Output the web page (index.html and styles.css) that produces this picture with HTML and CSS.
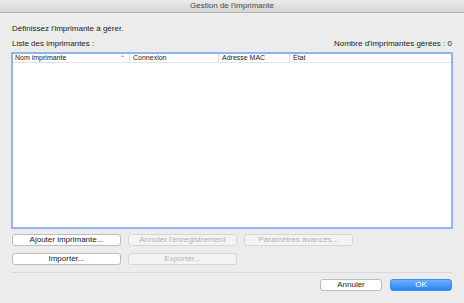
FILE: index.html
```html
<!DOCTYPE html>
<html lang="fr">

<head>
    <meta charset="UTF-8" />
    <title>Gestion de l'imprimante</title>
    <link rel="stylesheet" href="styles.css">
</head>

<body>
    <div class="dialog">
        <div class="titlebar">Gestion de l'imprimante</div>

        <div class="content">
            <p class="intro">Définissez l'imprimante à gérer.</p>

            <div class="list-head">
                <span>Liste des imprimantes :</span>
                <span>Nombre d'imprimantes gérées : 0</span>
            </div>

            <div class="table">
                <div class="table-header">
                    <div class="col col-name">Nom imprimante <span class="sort">&#8963;</span></div>
                    <div class="col">Connexion</div>
                    <div class="col">Adresse MAC</div>
                    <div class="col">État</div>
                </div>
                <div class="table-body"></div>
            </div>

            <div class="actions">
                <button class="btn">Ajouter imprimante...</button>
                <button class="btn" disabled>Annuler l'enregistrement</button>
                <button class="btn" disabled>Paramètres avancés...</button>
                <button class="btn">Importer...</button>
                <button class="btn" disabled>Exporter...</button>
            </div>

            <hr class="divider" />

            <div class="footer">
                <button class="btn btn-cancel">Annuler</button>
                <button class="btn btn-ok">OK</button>
            </div>
        </div>
    </div>
</body>

</html>
```

FILE: styles.css
```css
* {
    box-sizing: border-box;
    margin: 0;
    padding: 0;
}

body {
    font-family: 'Liberation Sans', Arial, sans-serif;
    font-size: 8px;
    color: #1a1a1a;
    background: #ececec;
    width: 464px;
    height: 303px;
    overflow: hidden;
}

.dialog {
    display: flex;
    flex-direction: column;
    height: 100%;
}

.titlebar {
    height: 13px;
    line-height: 12px;
    text-align: center;
    color: #4a4a4a;
    background: linear-gradient(#ebebeb, #d5d5d5);
    border-bottom: 1px solid #b4b4b4;
}

.content {
    display: flex;
    flex-direction: column;
    padding: 11px 11px 0 11px;
}

.intro {
    line-height: 10px;
    padding-left: 1px;
}

.list-head {
    display: flex;
    justify-content: space-between;
    line-height: 10px;
    margin-top: 5px;
    padding: 0 1px;
}

.table {
    margin-top: 3px;
    height: 177px;
    background: #fff;
    border: 2px solid #8fb4ef;
    border-radius: 1px;
}

.table-header {
    display: grid;
    grid-template-columns: 116px 89px 71px 1fr;
    height: 9px;
    line-height: 8px;
    font-size: 7px;
    border-bottom: 1px solid #e4e4e4;
}

.col {
    padding-left: 3px;
    border-left: 1px solid #dcdcdc;
    white-space: nowrap;
}

.col-name {
    padding-left: 2px;
    border-left: none;
    display: flex;
    justify-content: space-between;
    padding-right: 4px;
}

.sort {
    font-size: 6px;
    color: #555;
}

.actions {
    display: grid;
    grid-template-columns: repeat(3, 109px);
    column-gap: 7px;
    row-gap: 7px;
    margin-top: 5px;
    padding-left: 1px;
}

.btn {
    font-family: inherit;
    font-size: 8px;
    height: 12px;
    line-height: 10px;
    color: #1a1a1a;
    background: #fff;
    border: 1px solid #bdbdbd;
    border-radius: 3px;
}

.btn:disabled {
    color: #b4b4b4;
    background: #f3f3f3;
    border-color: #d6d6d6;
}

.divider {
    margin: 7px 1px 0 1px;
    border: none;
    border-top: 1px solid #d9d9d9;
}

.footer {
    display: flex;
    justify-content: flex-end;
    gap: 8px;
    margin-top: 6px;
    padding-right: 1px;
}

.footer .btn {
    width: 62px;
}

.btn-ok {
    color: #fff;
    background: linear-gradient(#6cb0fb, #2a84f8);
    border-color: #3d8ef3;
}
```
